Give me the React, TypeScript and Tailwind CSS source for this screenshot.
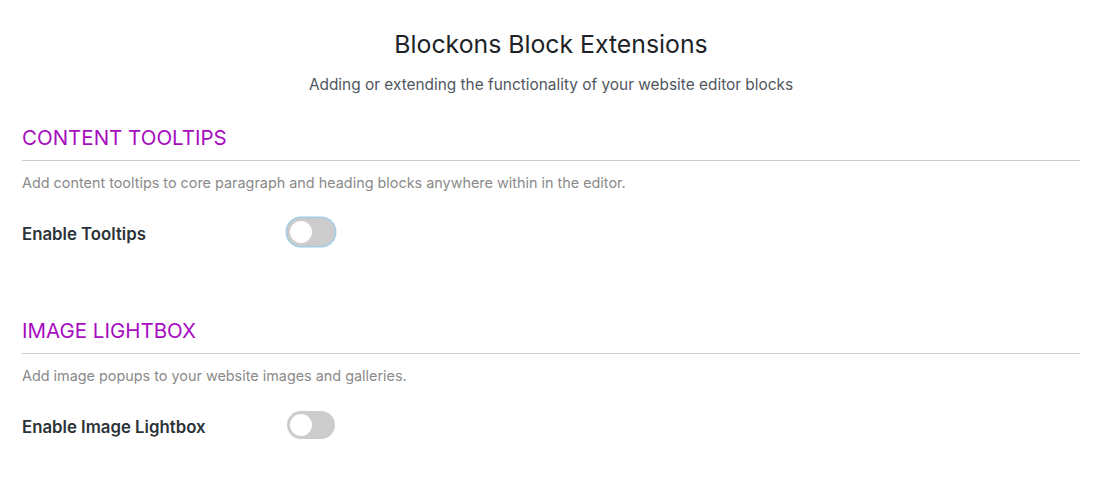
import React from "react";

function Toggle({ focused }: { focused?: boolean }) {
  return (
    <div
      className={
        "relative h-[28px] w-[48px] rounded-full bg-[#cccccc] " +
        (focused ? "ring-[1.5px] ring-[#9fcde8]" : "")
      }
    >
      <div className="absolute left-[3px] top-[3px] h-[22px] w-[22px] rounded-full bg-white" />
    </div>
  );
}

function Section({
  title,
  desc,
  label,
  focused,
}: {
  title: string;
  desc: string;
  label: string;
  focused?: boolean;
}) {
  return (
    <div>
      <h2 className="border-b border-[#cccccc] pb-[10px] text-[20.5px] leading-[24px] font-normal text-[#a70cbf]">
        {title}
      </h2>
      <p className="mt-[12px] text-[14.4px] leading-[20px] text-[#8a8a8a]">{desc}</p>
      <div className="mt-[25px] flex items-center">
        <div className="w-[265px] pt-[4px] text-[16.8px] leading-[20px] font-semibold text-[#2c3338]">
          {label}
        </div>
        <Toggle focused={focused} />
      </div>
    </div>
  );
}

export default function App() {
  return (
    <div
      className="min-h-[496px] w-full bg-white pl-[22px] pr-[20px] pt-[30px]"
      style={{ fontFamily: "Inter, 'Noto Sans', sans-serif" }}
    >
      <h1 className="text-center text-[24.8px] leading-[28px] font-normal text-[#1d2327]">
        Blockons Block Extensions
      </h1>
      <p className="mt-[17px] text-center text-[15.4px] leading-[20px] text-[#50575e]">
        Adding or extending the functionality of your website editor blocks
      </p>
      <div className="mt-[31px]">
        <Section
          title="CONTENT TOOLTIPS"
          desc="Add content tooltips to core paragraph and heading blocks anywhere within in the editor."
          label="Enable Tooltips"
          focused
        />
      </div>
      <div className="mt-[73px]">
        <Section
          title="IMAGE LIGHTBOX"
          desc="Add image popups to your website images and galleries."
          label="Enable Image Lightbox"
        />
      </div>
    </div>
  );
}
